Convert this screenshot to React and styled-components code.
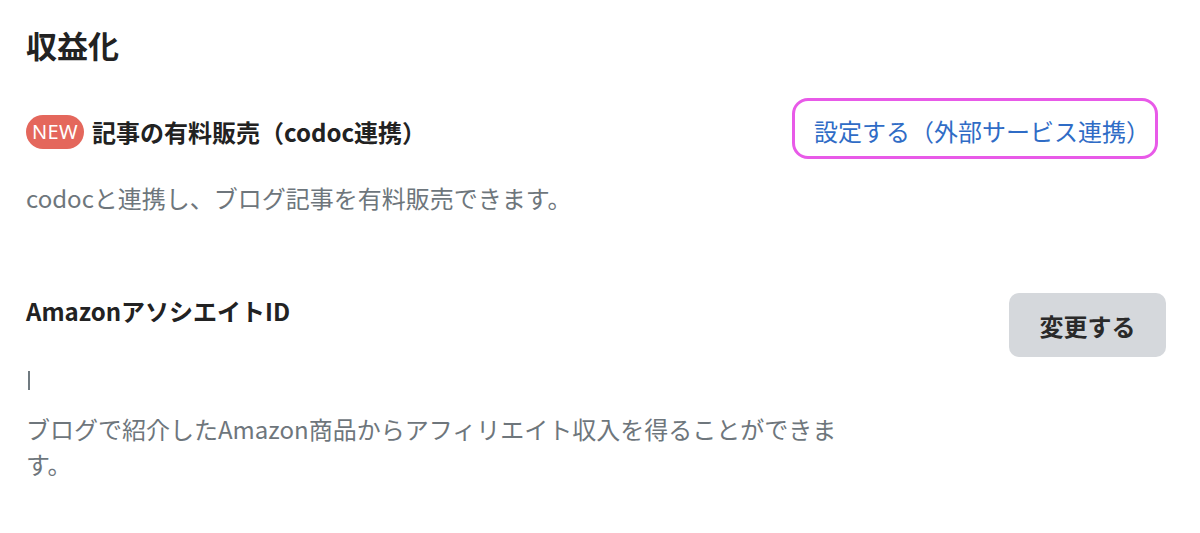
import React from 'react';
import styled, { createGlobalStyle } from 'styled-components';

const GlobalStyle = createGlobalStyle`
    body {
        margin: 0;
        background: #fff;
        font-family: "Noto Sans CJK JP", "Noto Sans", sans-serif;
        color: #222;
    }
`;

const Page = styled.div`
    padding: 25px 34px 0 26px;
`;

const Title = styled.h2`
    margin: 0;
    font-size: 31px;
    line-height: 40px;
    font-weight: 700;
    color: #222;
`;

const Section = styled.section`
    margin-top: ${props => props.gap}px;
`;

const Row = styled.div`
    display: flex;
    justify-content: space-between;
    align-items: ${props => props.align || 'center'};
`;

const Heading = styled.h3`
    margin: 0;
    display: flex;
    align-items: center;
    gap: 8px;
    font-size: 24px;
    line-height: 36px;
    font-weight: 700;
    color: #222;
`;

const Badge = styled.span`
    display: inline-flex;
    align-items: center;
    justify-content: center;
    width: 58px;
    height: 34px;
    border-radius: 17px;
    background: #e4675c;
    color: #fff;
    font-family: "Noto Sans", sans-serif;
    font-size: 20px;
    font-weight: 400;
    letter-spacing: 0.4px;
`;

const LinkBox = styled.a`
    display: inline-block;
    padding: 16px 5px 11px 19px;
    border: 3px solid #e85ae8;
    border-radius: 16px;
    color: #2f6cc6;
    font-size: 24px;
    line-height: 28px;
    text-decoration: none;
    margin-top: -6px;
    margin-right: 8px;
`;

const Description = styled.p`
    margin: ${props => props.top || 0}px 0 0;
    max-width: ${props => props.max || 1140}px;
    font-size: 24px;
    line-height: 35px;
    color: #6e767c;
`;

const Button = styled.button`
    width: 157px;
    height: 64px;
    border: none;
    border-radius: 10px;
    background: #d5d8dc;
    color: #2a2a2a;
    font-family: inherit;
    font-size: 24px;
    font-weight: 700;
`;

const Caret = styled.span`
    display: block;
    width: 2px;
    height: 19px;
    margin: 14px 0 0 2px;
    background: #707a80;
`;

export default function App() {
    return (
        <>
            <GlobalStyle />
            <Page>
                <Title>収益化</Title>
                <Section gap={39}>
                    <Row>
                        <Heading>
                            <Badge>NEW</Badge>
                            記事の有料販売（codoc連携）
                        </Heading>
                        <LinkBox href="#">設定する（外部サービス連携）</LinkBox>
                    </Row>
                    <Description top={21}>codocと連携し、ブログ記事を有料販売できます。</Description>
                </Section>
                <Section gap={78}>
                    <Row align="flex-start">
                        <Heading>AmazonアソシエイトID</Heading>
                        <Button>変更する</Button>
                    </Row>
                    <Caret />
                    <Description top={21} max={836}>
                        ブログで紹介したAmazon商品からアフィリエイト収入を得ることができます。
                    </Description>
                </Section>
            </Page>
        </>
    );
}
